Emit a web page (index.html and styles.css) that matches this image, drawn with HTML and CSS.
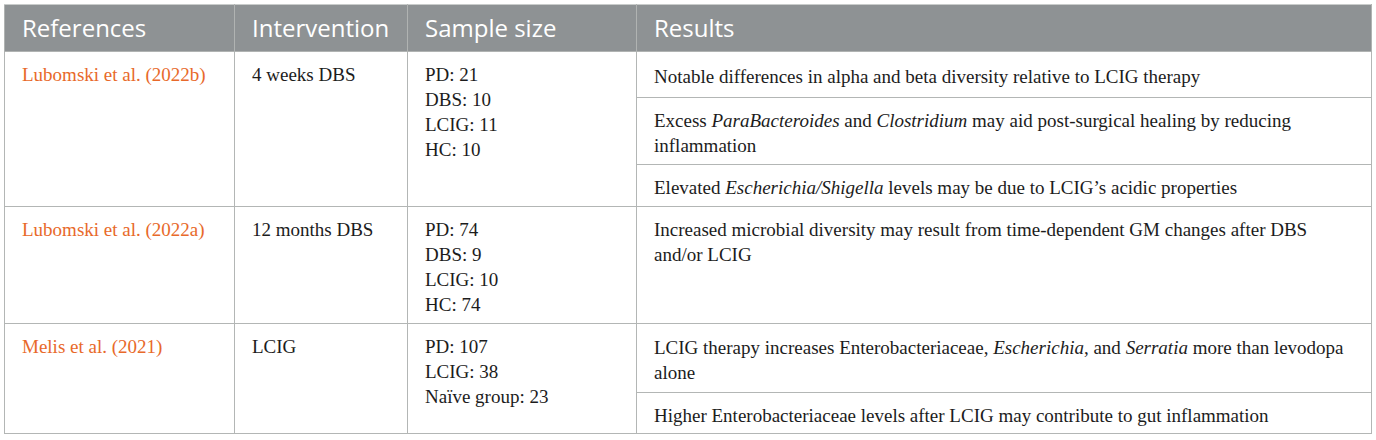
FILE: index.html
```html
<!DOCTYPE html>
<html lang="en">
<head>
<meta charset="utf-8">
<title>Table</title>
<link rel="stylesheet" href="styles.css">
</head>
<body>
<table class="data">
  <colgroup>
    <col class="c-ref">
    <col class="c-int">
    <col class="c-size">
    <col class="c-res">
  </colgroup>
  <thead>
    <tr>
      <th>References</th>
      <th>Intervention</th>
      <th>Sample size</th>
      <th>Results</th>
    </tr>
  </thead>
  <tbody>
    <tr class="first">
      <td rowspan="3"><a class="ref" href="#">Lubomski et al. (2022b)</a></td>
      <td rowspan="3">4 weeks DBS</td>
      <td rowspan="3">PD: 21<br>DBS: 10<br>LCIG: 11<br>HC: 10</td>
      <td class="res">Notable differences in alpha and beta diversity relative to LCIG therapy</td>
    </tr>
    <tr>
      <td class="res">Excess <i>ParaBacteroides</i> and <i>Clostridium</i> may aid post-surgical healing by reducing inflammation</td>
    </tr>
    <tr>
      <td class="res">Elevated <i>Escherichia/Shigella</i> levels may be due to LCIG’s acidic properties</td>
    </tr>
    <tr>
      <td><a class="ref" href="#">Lubomski et al. (2022a)</a></td>
      <td>12 months DBS</td>
      <td>PD: 74<br>DBS: 9<br>LCIG: 10<br>HC: 74</td>
      <td class="res">Increased microbial diversity may result from time-dependent GM changes after DBS and/or LCIG</td>
    </tr>
    <tr class="first-b">
      <td rowspan="2"><a class="ref" href="#">Melis et al. (2021)</a></td>
      <td rowspan="2">LCIG</td>
      <td rowspan="2">PD: 107<br>LCIG: 38<br>Naïve group: 23</td>
      <td class="res">LCIG therapy increases Enterobacteriaceae, <i>Escherichia</i>, and <i>Serratia</i> more than levodopa alone</td>
    </tr>
    <tr class="last">
      <td class="res">Higher Enterobacteriaceae levels after LCIG may contribute to gut inflammation</td>
    </tr>
  </tbody>
</table>
</body>
</html>
```

FILE: styles.css
```css
html, body {
  margin: 0;
  padding: 0;
  background: #ffffff;
}

body {
  padding: 4px 0 0 4px;
}

.data {
  border-collapse: collapse;
  width: 1367px;
  table-layout: fixed;
  border: 1px solid #b9bcbb;
  font-family: "Liberation Serif", "Times New Roman", serif;
  font-size: 19px;
  color: #1c1c1c;
}

.c-ref { width: 230px; }
.c-int { width: 173px; }
.c-size { width: 229px; }
.c-res { width: 735px; }

.data th {
  background: #8e9294;
  color: #ffffff;
  font-family: "Open Sans", "Noto Sans", sans-serif;
  font-weight: 400;
  font-size: 24px;
  line-height: 32px;
  text-align: left;
  padding: 7px 17px 7px 17px;
  border: 1px solid #b0b3b2;
  border-top-color: #c9cccb;
}

.data td {
  vertical-align: top;
  text-align: left;
  line-height: 25px;
  padding: 10px 17px 6px 17px;
  border: 1px solid #b3b6b5;
}

.data td.res {
  padding-right: 22px;
}

.data tr.first td.res {
  padding-top: 12px;
  padding-bottom: 8px;
}

.data tr.first-b td.res {
  padding-top: 11px;
  padding-bottom: 7px;
}

.data tr.last td.res {
  padding-bottom: 5px;
}

.ref {
  color: #e8692a;
  text-decoration: none;
}
```
